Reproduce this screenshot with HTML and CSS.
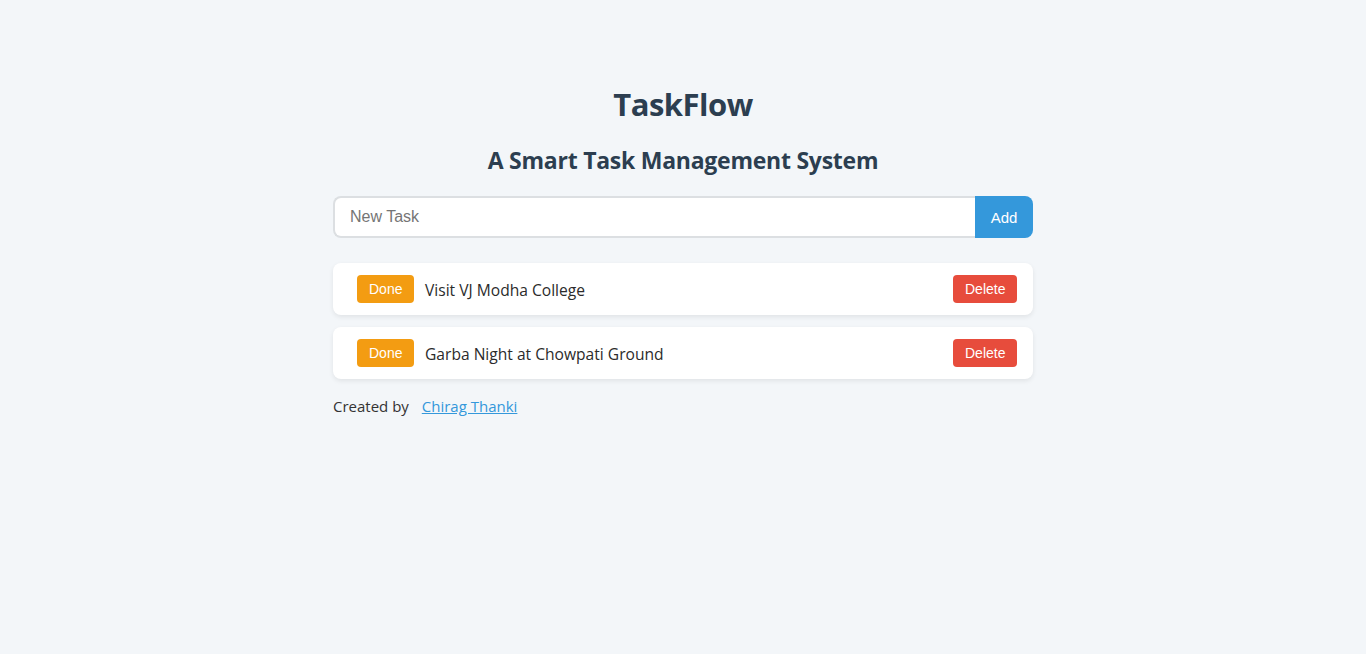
FILE: index.html
```html
<!DOCTYPE html>
<html lang="en">
<head>
<meta charset="utf-8">
<title>TaskFlow</title>
<link rel="stylesheet" href="styles.css">
</head>
<body>
<main class="app">
  <h1 class="title">TaskFlow</h1>
  <h2 class="subtitle">A Smart Task Management System</h2>
  <form class="task-form">
    <input class="task-input" type="text" placeholder="New Task">
    <button class="add-btn" type="button">Add</button>
  </form>
  <ul class="task-list">
    <li class="task">
      <button class="done-btn" type="button">Done</button>
      <span class="task-text">Visit VJ Modha College</span>
      <button class="delete-btn" type="button">Delete</button>
    </li>
    <li class="task">
      <button class="done-btn" type="button">Done</button>
      <span class="task-text">Garba Night at Chowpati Ground</span>
      <button class="delete-btn" type="button">Delete</button>
    </li>
  </ul>
  <p class="credit">Created by <a class="credit-link" href="#">Chirag Thanki</a></p>
</main>
</body>
</html>
```
FILE: styles.css
```css
html, body {
  margin: 0;
  padding: 0;
}
body {
  background: #f3f6f9;
  font-family: "Open Sans", "Noto Sans", sans-serif;
  color: #2c3e50;
  min-height: 654px;
}
.app {
  width: 700px;
  margin: 0 auto;
  padding-top: 82px;
}
.title {
  margin: 0;
  text-align: center;
  font-size: 31px;
  line-height: 44px;
  font-weight: 700;
  letter-spacing: -0.5px;
}
.subtitle {
  margin: 18px 0 0;
  text-align: center;
  font-size: 23px;
  line-height: 32px;
  font-weight: 700;
  letter-spacing: -0.25px;
}
.task-form {
  display: flex;
  margin: 20px 0 0;
  height: 42px;
}
.task-input {
  flex: 1;
  box-sizing: border-box;
  height: 42px;
  border: 2px solid #dcdfe2;
  border-right: none;
  border-radius: 8px 0 0 8px;
  padding: 0 15px;
  font-family: "Liberation Sans", Arial, sans-serif;
  font-size: 16px;
  color: #333;
  background: #fff;
  outline: none;
}
.task-input::placeholder {
  color: #757575;
}
.add-btn {
  width: 58px;
  height: 42px;
  border: none;
  border-radius: 0 8px 8px 0;
  background: #3498db;
  color: #fff;
  font-family: "Liberation Sans", Arial, sans-serif;
  font-size: 15px;
  padding: 0;
}
.task-list {
  list-style: none;
  margin: 25px 0 0;
  padding: 0;
  display: flex;
  flex-direction: column;
  gap: 12px;
}
.task {
  display: flex;
  align-items: center;
  height: 52px;
  box-sizing: border-box;
  padding: 0 16px 0 24px;
  background: #fff;
  border-radius: 8px;
  box-shadow: 0 2px 5px rgba(0, 0, 0, 0.08);
}
.done-btn, .delete-btn {
  height: 28px;
  border: none;
  border-radius: 4px;
  color: #fff;
  font-family: "Liberation Sans", Arial, sans-serif;
  font-size: 14px;
  padding: 0 12px;
}
.done-btn {
  width: 57px;
  background: #f39c12;
  margin-right: 11px;
}
.delete-btn {
  width: 64px;
  background: #e74c3c;
  margin-left: auto;
}
.task-text {
  font-size: 15.6px;
  color: #2b2b2b;
  padding-top: 2px;
}
.credit {
  margin: 17px 0 0;
  font-size: 15px;
  color: #333;
}
.credit-link {
  margin-left: 9px;
  color: #3498db;
}
```
